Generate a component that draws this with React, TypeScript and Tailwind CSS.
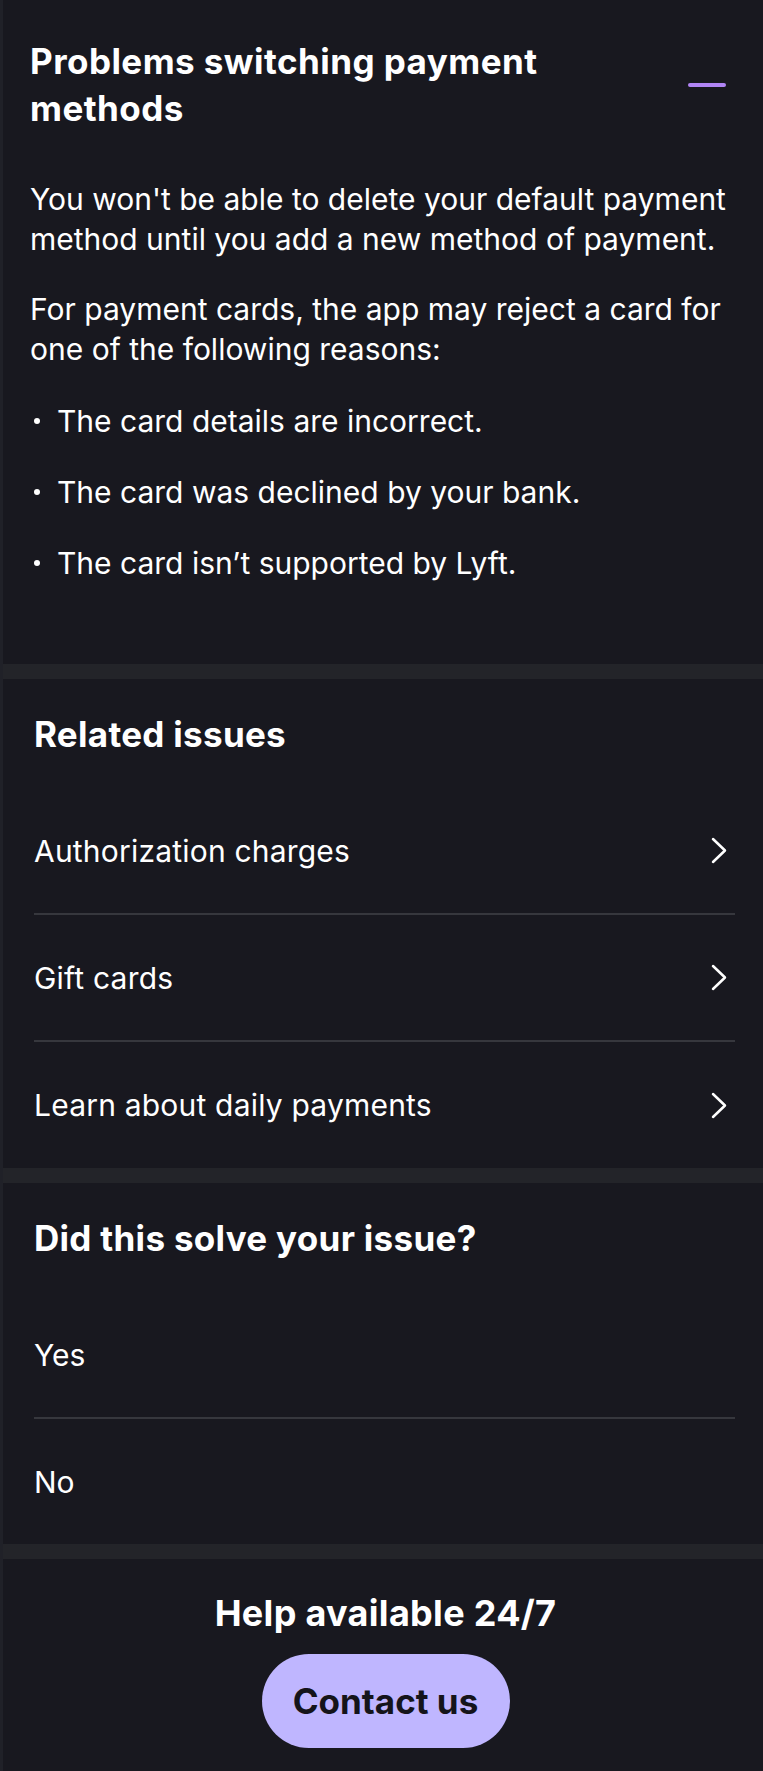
const related = ["Authorization charges", "Gift cards", "Learn about daily payments"];
const reasons = [
  "The card details are incorrect.",
  "The card was declined by your bank.",
  "The card isn\u2019t supported by Lyft.",
];

function Separator() {
  return <div className="h-[15px] bg-[#232429]" />;
}

function Chevron() {
  return (
    <svg width="16" height="27" viewBox="0 0 16 27" fill="none" className="mr-[8px] shrink-0">
      <path d="M2 2L14 13.5L2 25" stroke="white" strokeWidth="2.5" strokeLinecap="round" strokeLinejoin="round" />
    </svg>
  );
}

export default function App() {
  return (
    <div
      className="min-h-screen w-full bg-[#18181f] border-l-[3px] border-[#202128] text-white"
      style={{ fontFamily: "Inter, 'Open Sans', sans-serif" }}
    >
      {/* Expanded article */}
      <section className="pl-[27px] pr-[20px] pt-[38px] pb-[81px]">
        <div className="flex items-center justify-between gap-6">
          <h1 className="text-[35px] font-bold leading-[47px] tracking-[0.45px]">
            Problems switching payment
            <br />
            methods
          </h1>
          <span className="mr-[17px] block h-[4px] w-[38px] shrink-0 rounded-full bg-[#b185f5]" />
        </div>

        <p className="mt-[47px] text-[30px] leading-[40px]">
          You won't be able to delete your default payment method until you add a new method of payment.
        </p>
        <p className="mt-[30px] text-[30px] leading-[40px]">
          For payment cards, the app may reject a card for one of the following reasons:
        </p>

        <ul className="mt-[32px] flex flex-col gap-[31px]">
          {reasons.map((r) => (
            <li key={r} className="flex items-center text-[30px] leading-[40px]">
              <span className="ml-[4px] mr-[17px] block h-[6px] w-[6px] shrink-0 rounded-full bg-white" />
              <span>{r}</span>
            </li>
          ))}
        </ul>
      </section>

      <Separator />

      {/* Related issues */}
      <section className="pl-[31px] pr-[28px] pt-[35px]">
        <h2 className="text-[35px] font-bold leading-[40px] tracking-[0.3px]">Related issues</h2>
        <div className="mt-[34px]">
          {related.map((item, i) => (
            <button
              key={item}
              className={`flex w-full items-center justify-between text-left ${
                i < related.length - 1 ? "h-[127px] border-b-2 border-[#36373d]" : "h-[126px]"
              }`}
            >
              <span className="text-[30px] leading-[40px] tracking-[0.2px]">{item}</span>
              <Chevron />
            </button>
          ))}
        </div>
      </section>

      <Separator />

      {/* Feedback */}
      <section className="pl-[31px] pr-[28px] pt-[35px]">
        <h2 className="text-[35px] font-bold leading-[40px] tracking-[0.3px]">Did this solve your issue?</h2>
        <div className="mt-[34px]">
          <button className="flex h-[127px] w-full items-center border-b-2 border-[#36373d] text-[30px] leading-[40px]">
            Yes
          </button>
          <button className="flex h-[125px] w-full items-center text-[30px] leading-[40px]">
            No
          </button>
        </div>
      </section>

      <Separator />

      {/* Contact */}
      <section className="flex flex-col items-center pl-[5px] pt-[34px] pb-[24px]">
        <p className="text-[36px] font-bold leading-[40px] tracking-[0.3px]">Help available 24/7</p>
        <button className="mt-[21px] h-[94px] w-[248px] rounded-full bg-[#bfb6ff] text-[35px] font-bold text-[#15141a]">
          Contact us
        </button>
      </section>
    </div>
  );
}
